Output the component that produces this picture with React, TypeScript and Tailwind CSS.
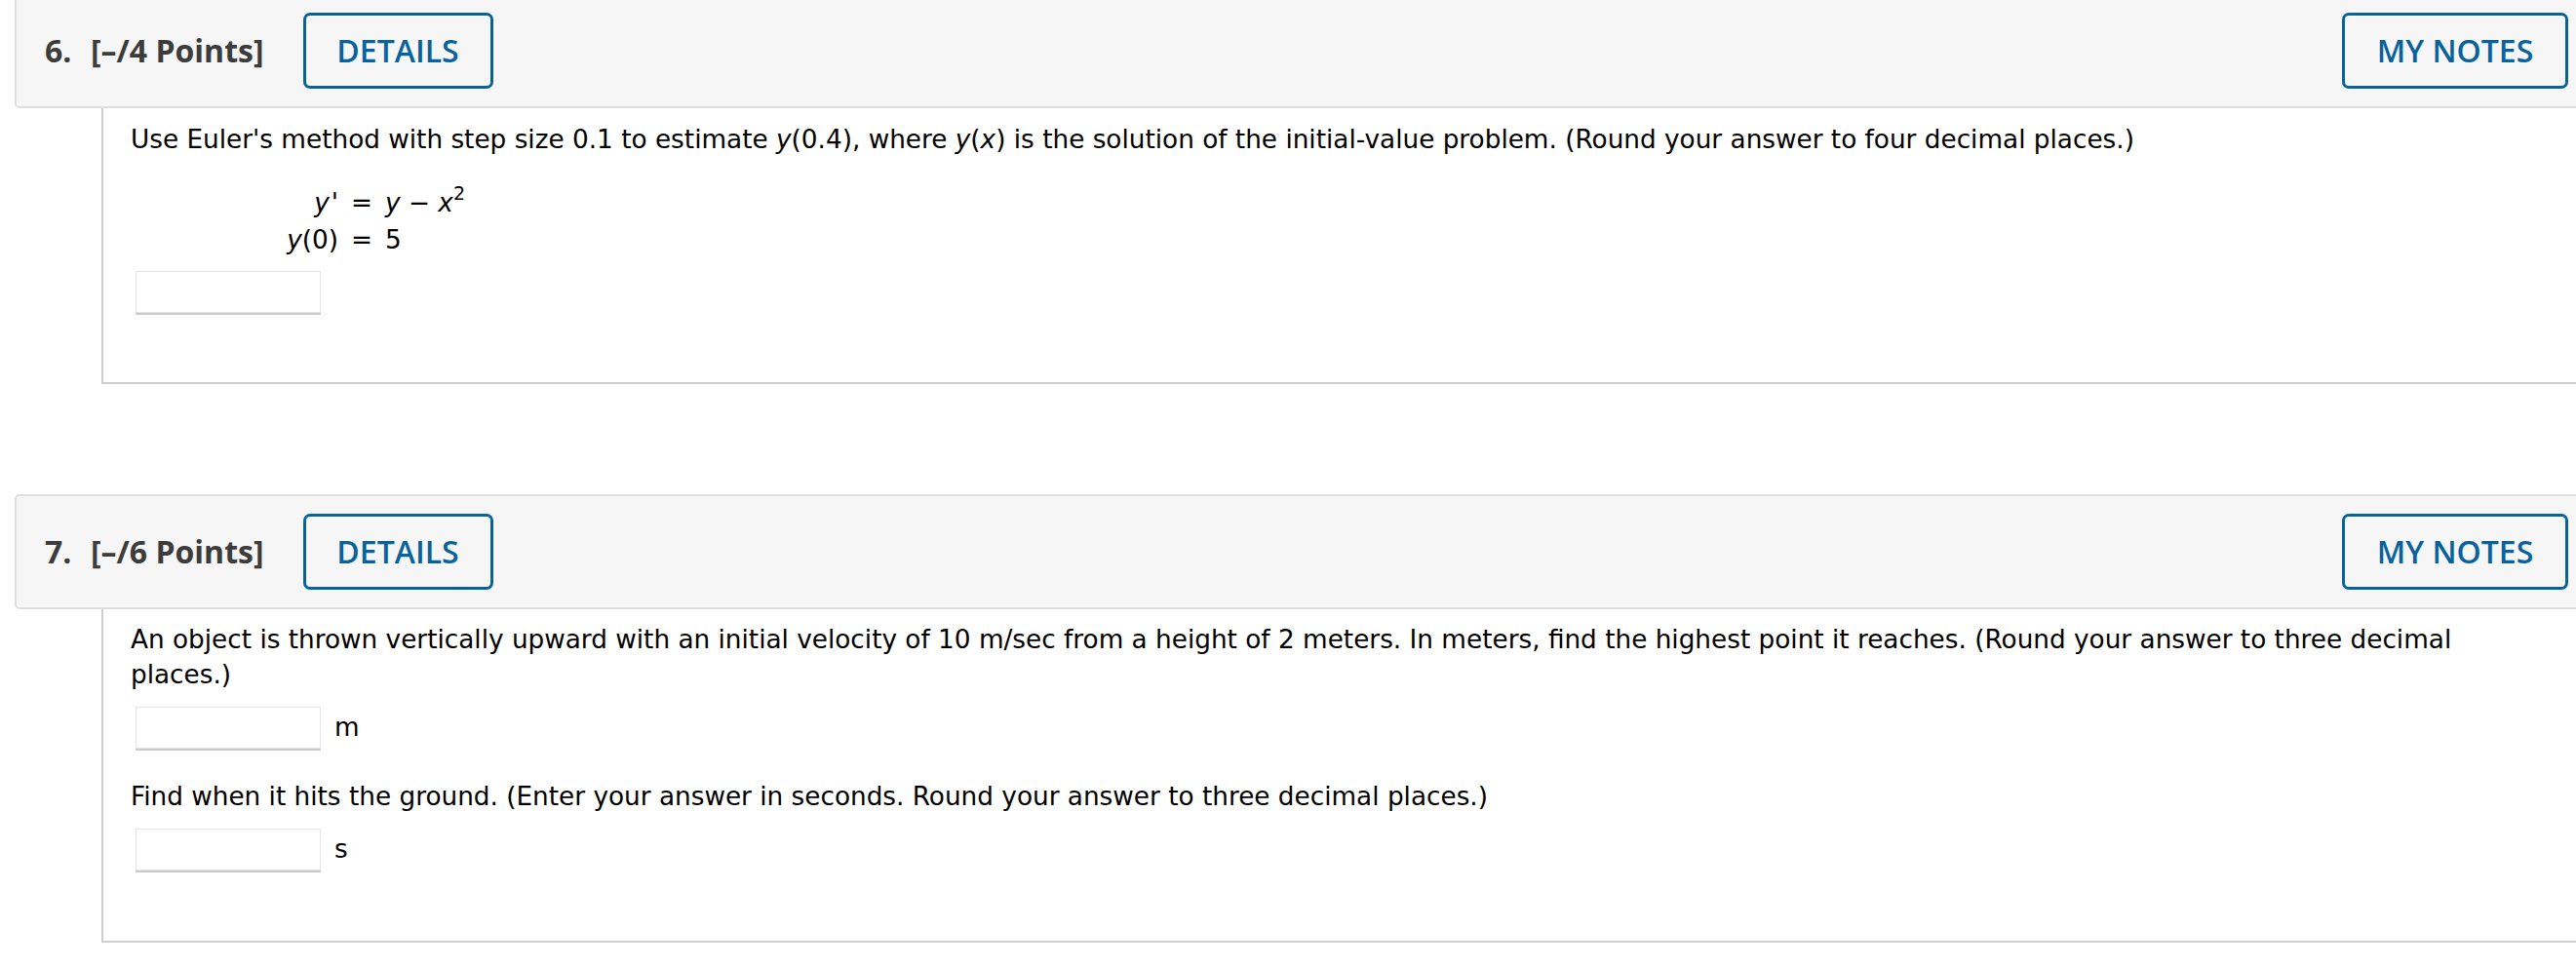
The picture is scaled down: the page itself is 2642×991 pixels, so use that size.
import React from "react";

function Header({ num, pts, first }: { num: string; pts: string; first?: boolean }) {
  return (
    <div
      className={`${first ? "mt-[-7px]" : "mt-[113px]"} ml-[15px] mr-[-10px] h-[118px] flex items-center bg-[#f6f6f6] border-2 border-[#dedede] rounded-[5px] pl-[29px] pr-[16px] font-['Open_Sans',sans-serif] text-[#3c3c3c]`}
    >
      <span className="text-[32px] font-bold w-[47px]">{num}</span>
      <span className="text-[32px] font-bold">{pts}</span>
      <button className="ml-[40px] h-[78px] w-[195px] border-[3px] border-[#08629b] rounded-[7px] text-[#08629b] text-[32px] font-semibold flex items-center justify-center">
        DETAILS
      </button>
      <div className="flex-1" />
      <button className="h-[78px] w-[232px] border-[3px] border-[#08629b] rounded-[7px] text-[#08629b] text-[32px] font-semibold flex items-center justify-center">
        MY NOTES
      </button>
    </div>
  );
}

function AnswerBox() {
  return (
    <div className="w-[190px] h-[43px] bg-white border border-[#e4e4e4] shadow-[0_2px_0_#cacaca]" />
  );
}

export default function App() {
  return (
    <div className="w-[2642px] h-[991px] overflow-hidden bg-white font-['DejaVu_Sans',sans-serif] text-black">
      <Header num="6." pts="[–/4 Points]" first />
      <div className="ml-[104px] mr-[-10px] border-l-2 border-b-2 border-[#cfcfcf] pl-[28px] pt-[14px] pb-[71px] text-[26.3px] leading-[36px]">
        <p>
          Use Euler's method with step size 0.1 to estimate <i>y</i>(0.4), where <i>y</i>(<i>x</i>) is the solution of the initial-value problem. (Round your answer to four decimal places.)
        </p>
        <div className="mt-[28px] ml-[146px] leading-[38px]">
          <div className="flex">
            <div className="w-[67px] text-right">
              <i>y</i>
              <span className="ml-[2px] italic">'</span>
            </div>
            <div className="w-[48px] text-center">=</div>
            <div>
              <i>y</i> − <i>x</i>
              <span className="relative top-[-12px] text-[19px] leading-none">2</span>
            </div>
          </div>
          <div className="flex">
            <div className="w-[67px] text-right">
              <i>y</i>(0)
            </div>
            <div className="w-[48px] text-center">=</div>
            <div>5</div>
          </div>
        </div>
        <div className="mt-[13px] ml-[5px]">
          <AnswerBox />
        </div>
      </div>

      <Header num="7." pts="[–/6 Points]" />
      <div className="ml-[104px] mr-[-10px] border-l-2 border-b-2 border-[#cfcfcf] pl-[28px] pt-[13px] pb-[72px] text-[26.3px] leading-[36px]">
        <p>
          An object is thrown vertically upward with an initial velocity of 10 m/sec from a height of 2 meters. In meters, find the highest point it reaches. (Round your answer to three decimal
          <br />
          places.)
        </p>
        <div className="mt-[15px] ml-[5px] flex items-center">
          <AnswerBox />
          <span className="ml-[14px] relative top-[-1px]">m</span>
        </div>
        <p className="mt-[31px]">
          Find when it hits the ground. (Enter your answer in seconds. Round your answer to three decimal places.)
        </p>
        <div className="mt-[15px] ml-[5px] flex items-center">
          <AnswerBox />
          <span className="ml-[14px] relative top-[-1px]">s</span>
        </div>
      </div>
    </div>
  );
}
